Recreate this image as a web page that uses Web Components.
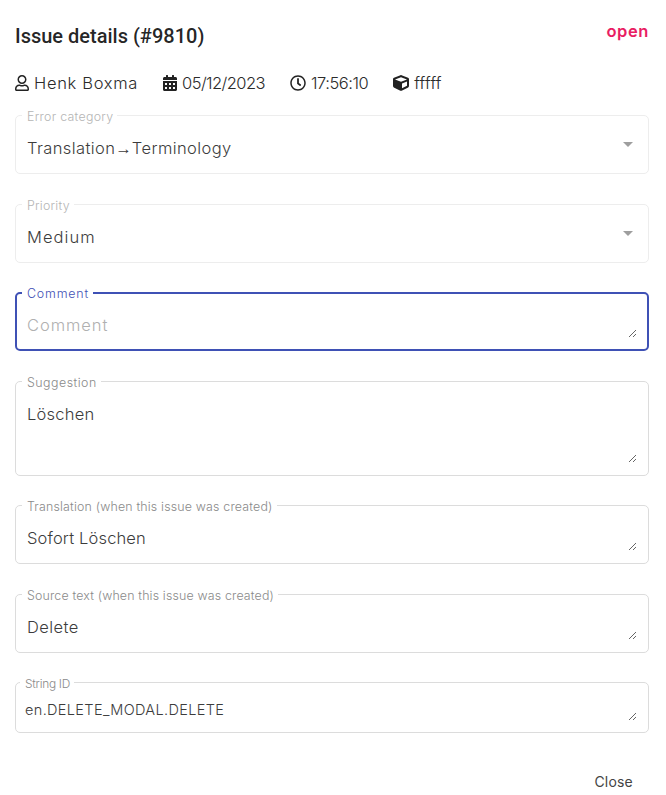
<!DOCTYPE html>
<html lang="en">
<head>
<meta charset="utf-8">
<title>Issue details</title>
<style>
  html, body { margin: 0; background: #fff; }
  body { font-family: Inter, "Liberation Sans", sans-serif; color: #333; }
</style>
</head>
<body>
<issue-dialog>
  <span slot="title">Issue details (#9810)</span>
  <span slot="status">open</span>
  <meta-item slot="meta" icon="user" style="--ls:.68px">Henk Boxma</meta-item>
  <meta-item slot="meta" icon="calendar" style="--ls:-.55px">05/12/2023</meta-item>
  <meta-item slot="meta" icon="clock" style="--ls:-.47px">17:56:10</meta-item>
  <meta-item slot="meta" icon="cube" style="--ls:.2px">fffff</meta-item>

  <form-field kind="select" disabled label="Error category" style="--h:59px;--ls:.4px;--lls:.28px">Translation<span style="font-family:'Liberation Sans',sans-serif;letter-spacing:0">→</span>Terminology</form-field>
  <form-field kind="select" disabled label="Priority" style="--h:59px;--ls:1.08px;--lls:.23px">Medium</form-field>
  <form-field focused placeholder label="Comment" style="--h:59px;--ls:.93px;--lls:.83px">Comment</form-field>
  <form-field label="Suggestion" style="--h:95px;--ls:.23px;--lls:.48px">Löschen</form-field>
  <form-field label="Translation (when this issue was created)" style="--h:59px;--ls:.15px;--lls:.18px">Sofort Löschen</form-field>
  <form-field label="Source text (when this issue was created)" style="--h:59px;--ls:.41px;--lls:.16px">Delete</form-field>
  <form-field dense label="String ID" style="--h:51px;--ls:.35px;--lls:-.27px">en.DELETE_MODAL.DELETE</form-field>

  <text-button slot="actions">Close</text-button>
</issue-dialog>

<script>
const ICONS = {
  user: '<svg viewBox="0 0 448 512" width="14" height="16"><path fill="currentColor" d="M313.6 304c-28.7 0-42.5 16-89.6 16-47.100 0-60.800-16-89.600-16C60.200 304 0 364.200 0 438.400V464c0 26.500 21.500 48 48 48h352c26.500 0 48-21.500 48-48v-25.600c0-74.200-60.200-134.400-134.400-134.400zM400 464H48v-25.600c0-47.600 38.800-86.400 86.400-86.400 14.600 0 38.300 16 89.600 16 51.700 0 74.900-16 89.600-16 47.600 0 86.400 38.800 86.400 86.400V464zM224 288c79.500 0 144-64.500 144-144S303.500 0 224 0 80 64.500 80 144s64.500 144 144 144zm0-240c52.900 0 96 43.100 96 96s-43.100 96-96 96-96-43.100-96-96 43.100-96 96-96z"/></svg>',
  calendar: '<svg viewBox="0 0 448 512" width="14" height="16"><path fill="currentColor" d="M0 464c0 26.500 21.500 48 48 48h352c26.500 0 48-21.500 48-48V192H0v272zm320-196c0-6.600 5.400-12 12-12h40c6.600 0 12 5.400 12 12v40c0 6.600-5.400 12-12 12h-40c-6.600 0-12-5.400-12-12v-40zm0 128c0-6.600 5.400-12 12-12h40c6.600 0 12 5.400 12 12v40c0 6.600-5.400 12-12 12h-40c-6.600 0-12-5.400-12-12v-40zM192 268c0-6.600 5.400-12 12-12h40c6.600 0 12 5.400 12 12v40c0 6.600-5.400 12-12 12h-40c-6.600 0-12-5.400-12-12v-40zm0 128c0-6.600 5.400-12 12-12h40c6.600 0 12 5.400 12 12v40c0 6.600-5.400 12-12 12h-40c-6.600 0-12-5.400-12-12v-40zM64 268c0-6.600 5.400-12 12-12h40c6.600 0 12 5.400 12 12v40c0 6.600-5.400 12-12 12H76c-6.600 0-12-5.400-12-12v-40zm0 128c0-6.600 5.400-12 12-12h40c6.600 0 12 5.400 12 12v40c0 6.600-5.400 12-12 12H76c-6.600 0-12-5.400-12-12v-40zM400 64h-48V16c0-8.800-7.200-16-16-16h-32c-8.800 0-16 7.200-16 16v48H160V16c0-8.800-7.200-16-16-16h-32c-8.800 0-16 7.200-16 16v48H48C21.500 64 0 85.500 0 112v48h448v-48c0-26.500-21.500-48-48-48z"/></svg>',
  clock: '<svg viewBox="0 0 512 512" width="16" height="16"><path fill="currentColor" d="M256 8C119 8 8 119 8 256s111 248 248 248 248-111 248-248S393 8 256 8zm0 448c-110.500 0-200-89.500-200-200S145.500 56 256 56s200 89.500 200 200-89.500 200-200 200zm61.800-104.400l-84.900-61.700c-3.100-2.300-4.900-5.900-4.900-9.700V116c0-6.600 5.400-12 12-12h32c6.600 0 12 5.400 12 12v141.700l66.800 48.600c5.400 3.900 6.500 11.400 2.600 16.800L334.600 349c-3.900 5.300-11.400 6.500-16.800 2.600z"/></svg>',
  cube: '<svg viewBox="0 0 512 512" width="16" height="16"><path fill="currentColor" d="M239.100 6.300l-208 78c-18.700 7-31.100 25-31.100 45v225.100c0 18.200 10.300 34.800 26.500 42.900l208 104c13.500 6.800 29.400 6.800 42.900 0l208-104c16.300-8.100 26.500-24.800 26.500-42.900V129.300c0-20-12.400-37.900-31.100-44.900l-208-78C262 2.200 250 2.200 239.100 6.300zM256 68.400l192 72v1.100l-192 78-192-78v-1.100l192-72zm32 356V275.500l160-65v133.900l-160 80z"/></svg>'
};

function shadow(host, html) {
  const r = host.attachShadow({ mode: 'open' });
  r.innerHTML = html;
  return r;
}

customElements.define('issue-dialog', class extends HTMLElement {
  constructor() {
    super();
    shadow(this, `
      <style>
        :host { display: block; box-sizing: border-box; width: 666px; height: 795px; padding: 22px 17px 0 15px; background: #fff; }
        header { display: flex; justify-content: space-between; align-items: flex-start; height: 28px; }
        .title { font: 500 20px/28px Roboto, sans-serif; color: rgba(0,0,0,.87); }
        .status { font: 600 16.500px/20px Inter, sans-serif; letter-spacing: .6px; color: #e91e63; margin-top: -1px; }
        .meta { display: flex; gap: 25px; margin-top: 21px; height: 24px; align-items: center; }
        .fields { display: flex; flex-direction: column; gap: 29.500px; margin-top: 20.250px; }
        footer { display: flex; justify-content: flex-end; margin-top: 32.750px; }
      </style>
      <header>
        <div class="title"><slot name="title"></slot></div>
        <div class="status"><slot name="status"></slot></div>
      </header>
      <div class="meta"><slot name="meta"></slot></div>
      <div class="fields"><slot></slot></div>
      <footer><slot name="actions"></slot></footer>`);
  }
});

customElements.define('meta-item', class extends HTMLElement {
  constructor() {
    super();
    shadow(this, `
      <style>
        :host { display: inline-flex; align-items: center; gap: 5px; font: 300 16.500px/24px Inter, sans-serif; letter-spacing: var(--ls, .2px); color: #2b2b2b; }
        svg { display: block; color: #222; }
      </style>
      ${ICONS[this.getAttribute('icon')] || ''}<span><slot></slot></span>`);
  }
});

customElements.define('form-field', class extends HTMLElement {
  constructor() {
    super();
    const label = this.getAttribute('label');
    const select = this.getAttribute('kind') === 'select';
    shadow(this, `
      <style>
        :host { display: block; position: relative; box-sizing: border-box; height: var(--h);
                border: 1px solid #dcdcdc; border-radius: 5px; font: 300 16.500px/24px Inter, sans-serif; letter-spacing: var(--ls, .2px); color: #3c3c3c; }
        :host([disabled]) { border-color: #ededed; }
        :host([focused]) { border: 2px solid #3f51b5; }
        .label { position: absolute; left: 6px; top: -7px; padding: 0 4px 0 5px; background: #fff; font-size: 12.400px; line-height: 15px; letter-spacing: var(--lls, .2px); color: #8a8a8a; white-space: nowrap; }
        :host([disabled]) .label { color: #b5b5b5; }
        :host([focused]) .label { left: 5px; top: -8px; color: #3f51b5; }
        .value { box-sizing: border-box; height: 100%; padding: 20px 11px 12px; }
        :host([focused]) .value { padding: 19px 10px 11px; }
        :host([placeholder]) .value { color: #b0b0b0; }
        :host([dense]) { font-size: 14.500px; }
        :host([dense]) .label { left: 4px; font-size: 11.900px; }
        :host([dense]) .value { padding: 15px 11px 11px 9px; }
        .input { box-sizing: border-box; height: 100%; resize: vertical; overflow: auto; }
        .arrow { position: absolute; right: 15px; top: 26px; width: 0; height: 0; border: 5px solid transparent; border-top-color: #9e9e9e; border-bottom: 0; }
      </style>
      <div class="label">${label}</div>
      <div class="value"><div class="${select ? '' : 'input'}"><slot></slot></div></div>
      ${select ? '<div class="arrow"></div>' : ''}`);
  }
});

customElements.define('text-button', class extends HTMLElement {
  constructor() {
    super();
    shadow(this, `
      <style>
        :host { display: inline-block; font: 400 14px/20px Inter, sans-serif; letter-spacing: .2px; color: #444; padding: 6px 16px; }
      </style>
      <slot></slot>`);
  }
});
</script>
</body>
</html>
